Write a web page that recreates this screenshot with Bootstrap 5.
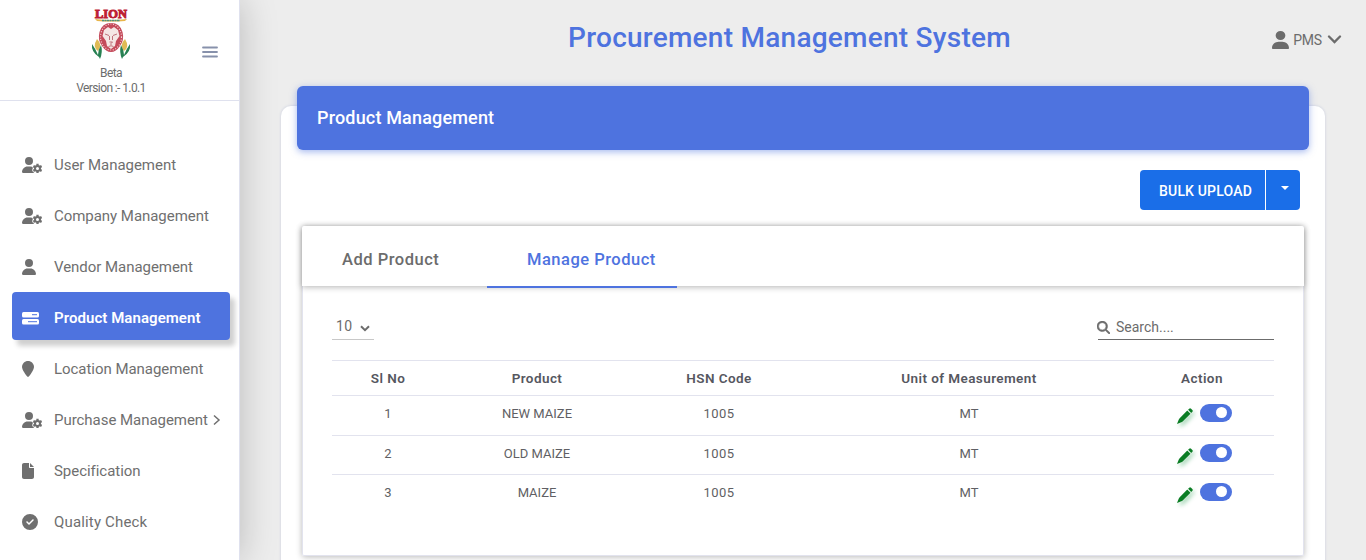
<!DOCTYPE html>
<html lang="en">
<head>
<meta charset="utf-8">
<meta name="viewport" content="width=device-width, initial-scale=1">
<title>Procurement Management System</title>
<link href="https://cdn.jsdelivr.net/npm/bootstrap@5.3.0/dist/css/bootstrap.min.css" rel="stylesheet">
<style>
body{font-family:Roboto,"Noto Sans",sans-serif;background:#ededed;color:#6c6c6c;height:560px;overflow:hidden}
.side{width:240px;background:#fff;border-right:1px solid #dfe1ee;box-shadow:0 0 35px rgba(0,0,0,.22);z-index:2}
.brand{height:101px;border-bottom:1px solid #dfe1ee}
.brand-col{width:222px;padding-top:6px;font-size:12px;line-height:15px;letter-spacing:-.6px}
.burger{left:202px;top:45px}
.menu{padding:38px 9px 0 12px;gap:3px}
.item{height:48px;padding:4px 0 0 10px;font-size:15px;border-radius:4px;color:#6f6f6f;text-decoration:none;white-space:nowrap;letter-spacing:-.04px}
.item .ic{width:32px}
.item.active{background:#4e73df;color:#fff;font-weight:600;letter-spacing:.06px;box-shadow:5px 6px 5px rgba(0,0,0,.19)}
svg{display:block;fill:currentColor;flex:none}
.topbar{height:86px}
.apptitle{font-size:28px;letter-spacing:.25px;font-weight:500;color:#4e73df;line-height:40px;padding:18px 0 0 1px;margin-right:28px}
.who{right:24px;top:28px;font-size:14px;line-height:21px;letter-spacing:-.2px}
.panel{display:flow-root;margin:20px 41px 0 41px;height:480px;border-radius:10px;background:#fff;box-shadow:0 0 2px 1px #dcdee6;padding:0 16px}
.panel-head{height:64px;margin-top:-20px;background:#4e73df;border-radius:6px;color:#fff;font-size:18px;font-weight:500;letter-spacing:.17px;padding:0 20px 1px;box-shadow:0 2px 7px rgba(78,115,223,.5)}
.bulk{margin:20px 9px 0 0;height:40px}
.bulk .btn{--bs-btn-bg:#1a6ee8;--bs-btn-border-color:#1a6ee8;border:0;border-radius:4px;font-size:14px;font-weight:500;letter-spacing:.17px;padding:2px 0 0}
.bulk .btn:first-child{width:125px;padding-left:6px}
.bulk .btn:last-child{width:34px;margin-left:1px;padding:0 0 2px 4px}
.bulk .dropdown-toggle::after{border-width:4px 4px 0;margin:0}
.inner{margin:16px 5px 0;height:330px;border:1px solid #e2e3ee;border-top:0;border-radius:2px;box-shadow:0 1px 6px rgba(0,0,0,.28)}
.tabs{height:60px;margin:0 -1px;background:#fff;border-radius:2px 2px 0 0;box-shadow:0 1px 6px rgba(0,0,0,.3);font-size:16.5px;font-weight:500;letter-spacing:.5px}
.tabs a{color:#6c6c6c;text-decoration:none;height:62px;padding:20px 0 0 40px;line-height:27px}
.tabs a.on{color:#4e73df;border-bottom:2px solid #4e73df;width:190px}
.tabs a:first-child{width:185px}
.tools{padding:30px 29px 0 29px;height:74px}
.pagesize{width:42px;height:24px;border-bottom:1px solid #c8c8c8;font-size:14px;line-height:20px;padding-left:4px;letter-spacing:.3px}
.find{width:176px;height:24px;border-bottom:1px solid #6c6c6c;font-size:14px;line-height:22px}
.grid{width:942px;margin:0 0 0 29px;table-layout:fixed;--bs-table-color:#5f5f64;--bs-table-bg:transparent;--bs-table-border-color:#e2e3ee;font-size:13px;text-align:center}
.grid th,.grid td{padding:0;line-height:18px;vertical-align:top;border-width:1px 0 0}
.grid th{font-weight:600;font-size:13.5px;letter-spacing:.42px;height:35px;padding-top:8px;color:#56575f}
.grid td{padding-top:9px}
.grid td:nth-child(3){letter-spacing:.45px}
.grid tbody tr{height:40px}
.grid tbody tr:nth-child(2){height:39px}
.pen{color:#0a7d24;margin-top:3px;filter:drop-shadow(2px 3px 2px rgba(0,140,50,.35))}
.tog{width:32px;height:18px;border-radius:9px;background:#4e73df;padding:3px 5px 0 16px;margin:-1px 0 0 7px}
.tog i{display:block;width:11px;height:11px;border-radius:6px;background:#fff}
</style>
</head>
<body>
<svg width="0" height="0" class="position-absolute" aria-hidden="true">
<defs>
<symbol id="user" viewBox="0 0 448 512"><path d="M224 256A128 128 0 1 0 224 0a128 128 0 1 0 0 256zm-45.7 48C79.8 304 0 383.8 0 482.3C0 498.7 13.3 512 29.7 512H418.3c16.4 0 29.7-13.3 29.7-29.7C448 383.8 368.2 304 269.7 304H178.3z"/></symbol>
<symbol id="usergear" viewBox="0 0 640 512"><path d="M224 256A128 128 0 1 0 224 0a128 128 0 1 0 0 256zm-45.700 48C79.800 304 0 383.800 0 482.300C0 498.700 13.300 512 29.700 512H392L330 450V395L350 350L325 312Q300 304 269.700 304Z"/><g stroke="currentColor" stroke-width="74"><path d="M496 216V520M364 292L628 444M364 444L628 292"/></g><circle cx="496" cy="368" r="110"/><circle cx="496" cy="368" r="48" fill="#fff"/></symbol>
<symbol id="pen" viewBox="0 0 512 512"><path d="M390 22Q420-8 450 22L490 62Q520 92 490 122L455 157L355 57ZM328 82L430 184L180 434Q160 450 135 458L0 512L54 377Q62 352 78 332Z"/></symbol>
</defs>
</svg>
<div class="d-flex h-100">
<aside class="side position-relative flex-shrink-0">
<div class="brand position-relative">
<div class="brand-col d-flex flex-column align-items-center text-center">
<svg width="42" height="60" viewBox="0 0 42 60">
<text x="5" y="12" font-family="Liberation Serif" font-size="13.5" font-weight="700" fill="#bd2033" stroke="#bd2033" stroke-width="1" textLength="32" lengthAdjust="spacingAndGlyphs" letter-spacing="0">LION</text>
<path d="M5 13Q21 15 37 13L35 15Q21 16 7 15Z" fill="#e8b54a"/><path d="M12 14.500H30" stroke="#4c927e" stroke-width="1.500" stroke-dasharray="2 .5"/>
<path d="M21 17Q30 17 32.500 26Q34.500 34 30 40Q26 46 21 46Q16 46 12 40Q7.500 34 9.500 26Q12 17 21 17Z" fill="#c44b5b"/>
<ellipse cx="21" cy="31" rx="10.500" ry="13" fill="none" stroke="#f3d0d3" stroke-width="1.200" stroke-dasharray="1 1.600"/>
<path d="M14 24L18 21L21 23L24 21L28 24L29.500 30L26 35L25 40L21 43L17 40L16 35L12.500 30Z" fill="#f5e6e4"/>
<path d="M15 28L19 29.500M27 28L23 29.500M19.500 36H22.500L21 37.500V39M18.500 40.500Q21 39 23.500 40.500M19.500 30V34M22.500 30V34" stroke="#b9646e" stroke-width=".9" fill="none"/>
<g><path d="M7 33Q13 39 8 45Q2 41 7 33Z" fill="#dfbb55"/><path d="M2 38Q1 46 9 51L10 53Q13 46 11 39Q8 44 8 49Q5 42 2 38Z" fill="#278052"/></g>
<g transform="translate(42 0) scale(-1 1)"><path d="M7 33Q13 39 8 45Q2 41 7 33Z" fill="#dfbb55"/><path d="M2 38Q1 46 9 51L10 53Q13 46 11 39Q8 44 8 49Q5 42 2 38Z" fill="#278052"/></g>
</svg>
<div>Beta</div><div>Version :- 1.0.1</div>
</div>
<svg class="burger position-absolute" width="16" height="14" viewBox="0 0 16 14"><path d="M1 2.500H15M1 7H15M1 11.500H15" stroke="#8791ab" stroke-width="1.800" stroke-linecap="round"/></svg>
</div>
<nav class="menu d-flex flex-column">
<a class="item d-flex align-items-center" href="#"><span class="ic"><svg width="20" height="16"><use href="#usergear"/></svg></span><span>User Management</span></a>
<a class="item d-flex align-items-center" href="#"><span class="ic"><svg width="20" height="16"><use href="#usergear"/></svg></span><span>Company Management</span></a>
<a class="item d-flex align-items-center" href="#"><span class="ic"><svg width="14" height="16"><use href="#user"/></svg></span><span>Vendor Management</span></a>
<a class="item active d-flex align-items-center" href="#"><span class="ic"><svg width="17" height="13" viewBox="0 0 17 13"><rect width="17" height="5.500" rx="1.500"/><rect y="7" width="17" height="5.500" rx="1.500"/><path d="M10 2.700H15M6 9.700H15" stroke="#4e73df"/></svg></span><span>Product Management</span></a>
<a class="item d-flex align-items-center" href="#"><span class="ic"><svg width="12" height="16" viewBox="0 0 384 512"><path d="M384 192c0 87.400-117 243-168.300 307.200c-12.300 15.300-35.100 15.300-47.400 0C117 435 0 279.400 0 192C0 86 86 0 192 0S384 86 384 192z"/></svg></span><span>Location Management</span></a>
<a class="item d-flex align-items-center" href="#"><span class="ic"><svg width="20" height="16"><use href="#usergear"/></svg></span><span>Purchase Management</span><svg class="ms-1" width="9" height="12" viewBox="0 0 9 12"><path d="M2 1.500L7 6L2 10.500" fill="none" stroke="currentColor" stroke-width="1.500"/></svg></a>
<a class="item d-flex align-items-center" href="#"><span class="ic"><svg width="12" height="16" viewBox="0 0 384 512"><path d="M0 64C0 28.700 28.700 0 64 0H224V128c0 17.700 14.300 32 32 32H384V448c0 35.300-28.700 64-64 64H64c-35.300 0-64-28.700-64-64V64zm384 64H256V0L384 128z"/></svg></span><span>Specification</span></a>
<a class="item d-flex align-items-center" href="#"><span class="ic"><svg width="16" height="16" viewBox="0 0 512 512"><path d="M256 512A256 256 0 1 0 256 0a256 256 0 1 0 0 512zM369 209L241 337c-9.400 9.400-24.600 9.400-33.900 0l-64-64c-9.400-9.400-9.400-24.600 0-33.900s24.600-9.400 33.900 0l47 47L335 175c9.400-9.400 24.600-9.400 33.900 0s9.400 24.600 0 33.900z"/></svg></span><span style="letter-spacing:.16px">Quality Check</span></a>
</nav>
</aside>
<main class="flex-grow-1">
<header class="topbar position-relative">
<h1 class="apptitle text-center mb-0">Procurement Management System</h1>
<div class="who position-absolute d-flex align-items-center"><svg class="me-1" width="17" height="18" viewBox="0 0 448 512" preserveAspectRatio="none"><use href="#user"/></svg><span style="padding-top:2px">PMS</span><svg style="margin-left:5px" width="15" height="9" viewBox="0 0 15 9"><path d="M2 1.500L7.500 7L13 1.500" fill="none" stroke="currentColor" stroke-width="2.300" stroke-linecap="round"/></svg></div>
</header>
<section class="panel">
<div class="panel-head d-flex align-items-center"><span>Product Management</span></div>
<div class="bulk d-flex justify-content-end"><button class="btn btn-primary rounded-end-0" type="button">BULK UPLOAD</button><button class="btn btn-primary dropdown-toggle rounded-start-0" type="button" aria-label="More"></button></div>
<div class="inner">
<nav class="tabs d-flex position-relative"><a href="#">Add Product</a><a class="on" href="#">Manage Product</a></nav>
<div class="tools d-flex justify-content-between">
<div class="pagesize d-flex">10<svg style="margin:9px 0 0 8px" width="10" height="7" viewBox="0 0 10 7"><path d="M1 1.300L5 5.200L9 1.300" fill="none" stroke="currentColor" stroke-width="2"/></svg></div>
<div class="find d-flex"><svg style="margin:5px 6px 0 -1px" width="13" height="13" viewBox="0 0 512 512"><path stroke="currentColor" stroke-width="20" d="M416 208c0 45.900-14.900 88.300-40 122.700L502.600 457.400c12.500 12.500 12.500 32.800 0 45.300s-32.800 12.500-45.300 0L330.700 376c-34.400 25.200-76.800 40-122.700 40C93.100 416 0 322.900 0 208S93.100 0 208 0S416 93.100 416 208zM208 352a144 144 0 1 0 0-288 144 144 0 1 0 0 288z"/></svg>Search....</div>
</div>
<table class="table grid">
<colgroup><col style="width:112px"><col style="width:186px"><col style="width:178px"><col style="width:322px"><col style="width:144px"></colgroup>
<thead><tr><th>Sl No</th><th>Product</th><th>HSN Code</th><th>Unit of Measurement</th><th>Action</th></tr></thead>
<tbody>
<tr><td>1</td><td>NEW MAIZE</td><td>1005</td><td>MT</td><td><div class="d-flex justify-content-center ps-1"><svg class="pen" width="16" height="16"><use href="#pen"/></svg><span class="tog"><i></i></span></div></td></tr>
<tr><td>2</td><td>OLD MAIZE</td><td>1005</td><td>MT</td><td><div class="d-flex justify-content-center ps-1"><svg class="pen" width="16" height="16"><use href="#pen"/></svg><span class="tog"><i></i></span></div></td></tr>
<tr><td>3</td><td>MAIZE</td><td>1005</td><td>MT</td><td><div class="d-flex justify-content-center ps-1"><svg class="pen" width="16" height="16"><use href="#pen"/></svg><span class="tog"><i></i></span></div></td></tr>
</tbody>
</table>
</div>
</section>
</main>
</div>
<script src="https://cdn.jsdelivr.net/npm/bootstrap@5.3.0/dist/js/bootstrap.bundle.min.js"></script>
</body>
</html>
